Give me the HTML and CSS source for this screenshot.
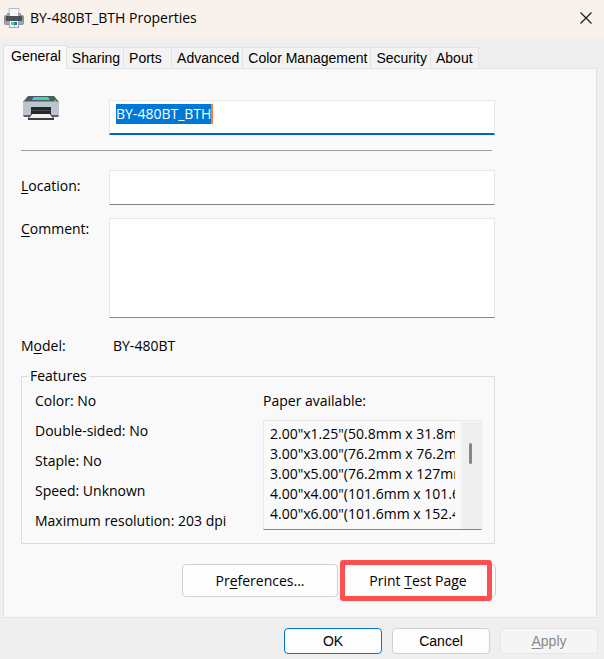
FILE: index.html
```html
<!DOCTYPE html>
<html lang="en">
<head>
    <meta charset="UTF-8">
    <meta name="viewport" content="width=device-width, initial-scale=1.0">
    <title>BY-480BT_BTH Properties</title>
    <link rel="stylesheet" href="styles.css">
</head>
<body>
    <header class="titlebar">
        <svg class="title-icon" width="20" height="20" viewBox="0 0 20 20">
            <rect x="5" y="0" width="10" height="10" fill="#f4f6f8"/>
            <path d="M5 8V0.5H15V8" fill="none" stroke="#b9bdc1"/>
            <rect x="0" y="7" width="20" height="10" rx="2" fill="#8d9297"/>
            <rect x="3" y="5" width="14" height="3" fill="#9ea3a7"/>
            <rect x="6" y="1" width="8" height="7" fill="#f4f6f8"/>
            <rect x="2" y="8" width="16" height="5" fill="#4b5055"/>
            <rect x="1" y="13" width="18" height="3" fill="#a2a6aa"/>
            <rect x="5" y="13" width="10" height="7" fill="#a0a5aa"/>
            <rect x="6" y="13" width="8" height="6" fill="#f5f9fb"/>
            <rect x="7" y="14" width="3" height="3" fill="#5db4e4"/>
            <rect x="10" y="14" width="1" height="4" fill="#3fae63"/>
            <rect x="11" y="14" width="2" height="3" fill="#2f62c0"/>
        </svg>
        <h1>BY-480BT_BTH Properties</h1>
        <button class="close" type="button" aria-label="Close">
            <svg width="12" height="12" viewBox="0 0 12 12">
                <path d="M0.5 0.5L11.5 11.5M11.5 0.5L0.5 11.5" stroke="#1a1a1a" stroke-width="1.2"/>
            </svg>
        </button>
    </header>

    <main class="dialog">
        <nav class="tabs" role="tablist">
            <button class="tab active" type="button" role="tab" aria-selected="true">General</button>
            <button class="tab" type="button" role="tab">Sharing</button>
            <button class="tab" type="button" role="tab">Ports</button>
            <button class="tab" type="button" role="tab">Advanced</button>
            <button class="tab" type="button" role="tab">Color Management</button>
            <button class="tab" type="button" role="tab">Security</button>
            <button class="tab" type="button" role="tab">About</button>
        </nav>

        <section class="panel">
            <div class="content">
                <div class="row name-row">
                    <svg class="printer" width="38" height="28" viewBox="0 0 38 28">
                        <path d="M6 2H32L37 8H1Z" fill="#50585f"/>
                        <path d="M12 3H26L28 6H10Z" fill="#3fdc98"/>
                        <path d="M12 3H18L17 6H10Z" fill="#49c5ea"/>
                        <rect x="1" y="7" width="36" height="15" rx="1" fill="#bcc4ce"/>
                        <rect x="1" y="7" width="36" height="1" fill="#8b949c"/>
                        <rect x="32" y="6" width="2" height="2" fill="#21e835"/>
                        <path d="M1 21H37L36 23H2Z" fill="#59626b"/>
                        <rect x="9" y="13" width="20" height="9" fill="#24272b"/>
                        <path d="M9 16.5H29" stroke="#41464b"/>
                        <path d="M10 20H28L31 24H7Z" fill="#f3eef0"/>
                        <rect x="6" y="24" width="26" height="2" fill="#3b3f44"/>
                        <path d="M9 20H10L7 24H6ZM28 20H29L32 24H31Z" fill="#3b3f44"/>
                    </svg>
                    <label class="box name-box">
                        <input id="name" type="text" value="BY-480BT_BTH" aria-label="Printer name">
                    </label>
                </div>
                <hr>
                <div class="row">
                    <label for="location"><u>L</u>ocation:</label>
                    <input class="box" id="location" type="text">
                </div>
                <div class="row">
                    <label for="comment"><u>C</u>omment:</label>
                    <textarea class="box" id="comment"></textarea>
                </div>
                <div class="row model">
                    <span>M<u>o</u>del:</span>
                    <span class="model-name">BY-480BT</span>
                </div>

                <fieldset>
                    <legend>Features</legend>
                    <ul class="features">
                        <li>Color: No</li>
                        <li>Double-sided: No</li>
                        <li>Staple: No</li>
                        <li>Speed: Unknown</li>
                        <li>Maximum resolution: 203 dpi</li>
                    </ul>
                    <div class="paper">
                        <label for="paper">Paper available:</label>
                        <div class="list">
                            <select id="paper" size="5">
                                <option>2.00"x1.25"(50.8mm x 31.8mm)</option>
                                <option>3.00"x3.00"(76.2mm x 76.2mm)</option>
                                <option>3.00"x5.00"(76.2mm x 127mm)</option>
                                <option>4.00"x4.00"(101.6mm x 101.6mm)</option>
                                <option>4.00"x6.00"(101.6mm x 152.4mm)</option>
                            </select>
                            <div class="scrollbar"><div class="thumb"></div></div>
                        </div>
                    </div>
                </fieldset>

                <div class="actions">
                    <button type="button">Pr<u>e</u>ferences...</button>
                    <button class="marked" type="button">Print <u>T</u>est Page</button>
                </div>
            </div>
        </section>

        <footer class="buttons">
            <button class="default" type="button">OK</button>
            <button type="button">Cancel</button>
            <button type="button" disabled><u>A</u>pply</button>
        </footer>
    </main>

    <script>
        document.getElementById("name").select();
    </script>
</body>
</html>
```
FILE: styles.css
```css
* {
    box-sizing: border-box;
}
body {
    margin: 0;
    background: #efefef;
    color: #000;
    font: 14px/20px "Open Sans", "Noto Sans", sans-serif;
}
button, input, textarea, select {
    font: inherit;
    color: inherit;
}
u {
    text-underline-offset: 2px;
}
.titlebar {
    display: flex;
    align-items: center;
    height: 37px;
    padding: 0 12px 1px 4px;
    background: #f9f1ec;
}
.titlebar h1 {
    flex: 1;
    margin: 0 0 0 6px;
    font-size: 14px;
    font-weight: normal;
}
.close {
    display: flex;
    padding: 0;
    border: 0;
    background: none;
}
.dialog {
    padding: 8px 6px 5px 3px;
}
.tabs {
    display: flex;
    align-items: flex-end;
    font: 14px/20px "Liberation Sans", Arial, sans-serif;
}
.tab {
    min-width: 48px;
    height: 21px;
    padding: 0 3px 0 5px;
    border: 1px solid #e2e2e2;
    border-width: 1px 1px 0 0;
    background: #f3f3f3;
    text-align: left;
}
.tab.active {
    height: 24px;
    margin-bottom: -1px;
    padding: 0 5px 3px 7px;
    border-left-width: 1px;
    background: #f9f9f9;
}
.panel {
    margin-right: 1px;
    padding: 25px 17px 20px;
    border: 1px solid #e2e2e2;
    background: #f9f9f9;
}
.content {
    max-width: 474px;
}
.row {
    display: grid;
    grid-template-columns: 88px 1fr;
    margin-bottom: 13px;
}
.row label {
    padding-top: 6px;
}
.row label[for="comment"] {
    padding-top: 1px;
}
.box {
    width: 100%;
    height: 35px;
    border: 1px solid #e8e8e8;
    border-bottom-color: #868686;
    background: #fff;
    outline: 0;
}
textarea.box {
    display: block;
    height: 100px;
    resize: none;
}
.name-row {
    margin-bottom: 15px;
}
.name-row .name-box {
    display: flex;
    align-items: flex-start;
    margin-top: 6px;
    padding: 3px 6px;
    border-bottom: 2px solid #0067c0;
}
.name-box input {
    field-sizing: content;
    height: 20px;
    padding: 0;
    border: 0;
    border-right: 2px solid #ef8533;
    outline: 0;
    background: none;
}
.name-box input::selection {
    background: #0078d7;
    color: #fff;
}
.printer {
    margin-left: 1px;
}
hr {
    margin: 0 3px 19px 0;
    border: 0;
    border-top: 1px solid #a0a0a0;
}
.row.model {
    margin: 18px 0 10px;
}
.model-name {
    padding-left: 4px;
}
fieldset {
    display: grid;
    grid-template-columns: 228px 1fr;
    margin: 0;
    padding: 5px 12px 12px 13px;
    border: 1px solid #dcdcdc;
}
legend {
    margin-left: -7px;
    padding: 0 2px;
}
.features {
    display: grid;
    gap: 10px;
    align-content: start;
    margin: 0;
    padding: 0;
    list-style: none;
}
.paper {
    min-width: 0;
}
.paper label {
    display: block;
    margin-bottom: 9px;
}
.list {
    display: flex;
    height: 110px;
    border: 1px solid #e8e8e8;
    border-bottom-color: #868686;
}
.list select {
    flex: 1;
    min-width: 0;
    height: 100px;
    margin: 3px 6px 0;
    padding: 0;
    border: 0;
    outline: 0;
    background: none;
    overflow: hidden;
}
.list option {
    min-height: 20px;
    padding: 0;
    line-height: 20px;
}
.scrollbar {
    width: 20px;
    margin-top: 1px;
    padding: 21px 9px 0 8px;
    background: #efefef;
}
.thumb {
    height: 21px;
    border-radius: 2px;
    background: #868686;
}
.actions, .buttons {
    display: flex;
    justify-content: flex-end;
}
.actions {
    gap: 2px;
    margin: 20px -1px 0 0;
}
.actions button, .buttons button {
    border: 1px solid #d0d0d0;
    border-radius: 4px;
    background: #fdfdfd;
}
.actions button {
    width: 156px;
    height: 33px;
}
.marked {
    position: relative;
}
/* highlight frame over the button */
.marked::after {
    content: "";
    position: absolute;
    inset: -5px 3px -5px -1px;
    border: 5px solid #ff5050;
    border-radius: 3px;
}
.buttons {
    gap: 10px;
    margin-top: 10px;
    font: 14px/20px "Liberation Sans", Arial, sans-serif;
}
.buttons button {
    width: 98px;
    height: 26px;
}
.buttons .default {
    border-color: #0078d4;
}
.buttons button:disabled {
    border-color: #e6e6e6;
    background: #f5f5f5;
    color: #8a8a8a;
}
```
